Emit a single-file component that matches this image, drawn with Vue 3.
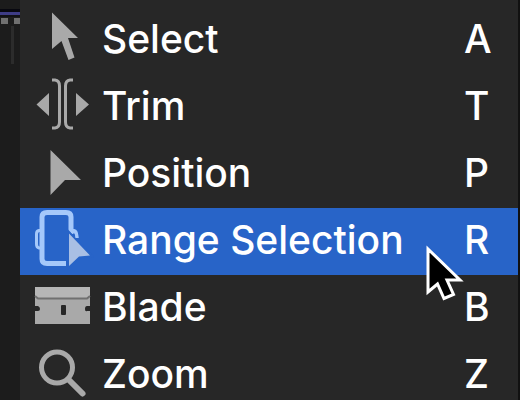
<script setup>
import { ref } from 'vue'

const tools = [
  { name: 'Select', key: 'A' },
  { name: 'Trim', key: 'T' },
  { name: 'Position', key: 'P' },
  { name: 'Range Selection', key: 'R' },
  { name: 'Blade', key: 'B' },
  { name: 'Zoom', key: 'Z' },
]
const active = ref('Range Selection')
</script>

<template>
  <main class="stage">
    <aside class="timeline" aria-hidden="true">
      <div class="track"></div>
      <div class="frames"><i></i><i></i></div>
      <div class="tick"></div>
    </aside>

    <div class="menu" role="menu">
      <button
        v-for="tool in tools"
        :key="tool.name"
        type="button"
        role="menuitem"
        class="item"
        :class="{ active: active === tool.name }"
        @click="active = tool.name"
      >
        <svg class="icon" viewBox="0 0 64 67" aria-hidden="true">
          <path v-if="tool.name === 'Select'" class="fill" d="M22 5.500 48 31H38L44.500 50.500 38.500 53 31.500 34 22 42Z" />
          <g v-else-if="tool.name === 'Trim'">
            <path class="fill" d="M6.500 30.500 19 19V42ZM59 30.500 46 19V42Z" />
            <path class="line thin" d="M22 6H25Q29.500 6.500 29.500 12V48Q29.500 53.500 25 54H22M43 6H40Q35.500 6.500 35.500 12V48Q35.500 53.500 40 54H43" />
          </g>
          <path v-else-if="tool.name === 'Position'" class="fill" d="M20.500 9 51 39H35L20.500 54Z" />
          <g v-else-if="tool.name === 'Range Selection'">
            <path class="line" d="M36 55.500H17Q12 55.500 12 51V9Q12 4.500 17 4.500H36Q41 4.500 41 9V26" />
            <path class="line thin" d="M12 22.500H9Q6.500 23 6.500 26V36Q6.500 39.500 9 40H12M41 22.500H44Q47 23 47 30" />
            <path class="halo" d="M39 25.500 60 47.500 49 48.500 39 58Z" />
            <path class="line thin" d="M41 23.500H44Q46.500 24 47 30" />
            <path class="pointer" d="M39 25.500 60 47.500 49 48.500 39 58Z" />
          </g>
          <g v-else-if="tool.name === 'Blade'">
            <path class="fill" d="M5 12H60V31H57Q55 31 55 34T57 36H60V49H5V36H8Q10 36 10 34T8 31H5Z" />
            <path class="spine" d="M5 12H60V21L57 23H8L5 21Z" />
            <path class="crease" d="M5 21 8 23.500H57L60 21" />
            <rect class="slot" x="31" y="30" width="5" height="10" rx="1" />
          </g>
          <g v-else>
            <circle class="line" cx="27" cy="25.500" r="15.500" />
            <path class="line handle" d="M39 38 52.500 51.500" />
          </g>
        </svg>
        <span class="name">{{ tool.name }}</span>
        <kbd class="key">{{ tool.key }}</kbd>
      </button>
    </div>

    <svg class="cursor" viewBox="0 0 40 60" aria-hidden="true">
      <path d="M4 5 36 36H23L29.500 50.500 20 54.500 13.500 40 4 48Z" />
    </svg>
  </main>
</template>

<style>
body {
  background: #1c1c1c;
}
</style>

<style scoped>
.stage {
  position: relative;
  display: flex;
  height: 100vh;
  overflow: hidden;
  background: #1c1c1c;
  font-family: Inter, "Liberation Sans", sans-serif;
}
.timeline {
  flex: 0 0 20px;
  min-width: 0;
  padding-top: 9px;
  box-sizing: border-box;
  overflow: hidden;
}
.track {
  height: 3px;
  background: #3e3c86;
  border-top: 3px solid #080810;
  border-bottom: 2px solid #111116;
}
.frames {
  display: flex;
  gap: 6px;
  padding: 1px 0 0 1px;
}
.frames i {
  flex: 0 0 7px;
  height: 6px;
  background: #707070;
}
.tick {
  width: 3px;
  height: 38px;
  margin: 2px 0 0 11px;
  background: #2c2c2c;
}
.menu {
  flex: 1;
  height: max-content;
  padding-top: 7px;
  border-right: 2px solid #111;
  background: #272727;
}
.item {
  display: flex;
  align-items: center;
  width: 100%;
  height: 67px;
  padding: 0 26px 0 10px;
  border: 0;
  background: transparent;
  color: #fff;
  font: inherit;
  text-align: left;
}
.item.active {
  background: #2864c8;
}
.icon {
  flex: 0 0 64px;
  height: 67px;
  color: #a9a9a9;
}
.active .icon {
  color: #a5c8fa;
}
.fill {
  fill: currentColor;
}
.line {
  fill: none;
  stroke: currentColor;
  stroke-width: 5px;
}
.thin {
  stroke-width: 3px;
}
.handle {
  stroke-width: 6px;
  stroke-linecap: round;
}
.halo {
  fill: #2864c8;
  stroke: #2864c8;
  stroke-width: 4px;
}
.pointer {
  fill: #a9bfe4;
}
.spine {
  fill: #b6b6b6;
}
.crease {
  fill: none;
  stroke: #707070;
  stroke-width: 2px;
}
.slot {
  fill: #272727;
}
.name,
.key {
  padding-bottom: 4px;
  font: inherit;
  font-size: 39px;
  font-weight: 500;
  line-height: 48px;
  white-space: nowrap;
}
.name {
  flex: 1;
  padding-left: 8px;
}
.key {
  width: 28px;
}
.cursor {
  position: absolute;
  left: 424px;
  top: 244px;
  width: 40px;
  height: 60px;
  fill: #000;
  stroke: #fff;
  stroke-width: 3px;
}
</style>
